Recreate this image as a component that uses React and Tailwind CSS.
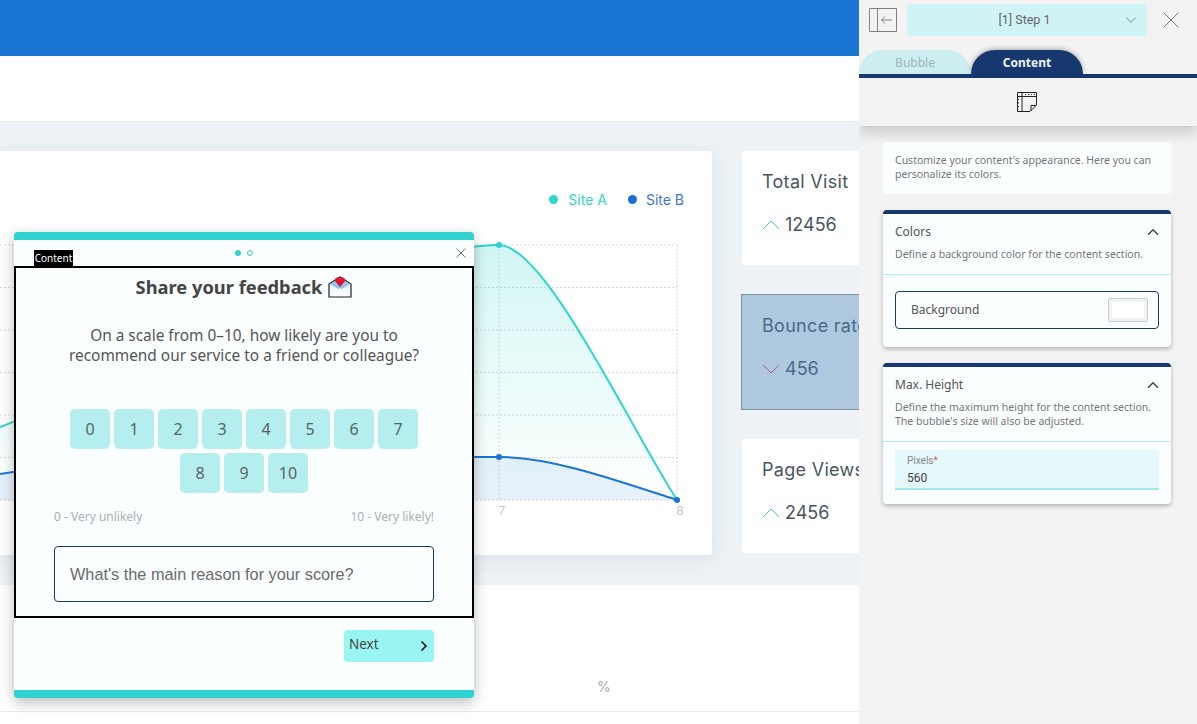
import { ChevronUp, ChevronDown, ChevronRight } from "lucide-react";

const scores = [0, 1, 2, 3, 4, 5, 6, 7, 8, 9, 10];
const gridRows = [245, 287.5, 330, 372.5, 415, 457.5, 500];
const gridCols = [143, 321, 499, 677];

const Chart = () => (
  <svg width="712" height="290" viewBox="0 235 712 290" className="block">
    <defs>
      <linearGradient id="tealFill" x1="0" y1="0" x2="0" y2="1">
        <stop offset="0" stopColor="#2fd6cd" stopOpacity="0.22" />
        <stop offset="1" stopColor="#2fd6cd" stopOpacity="0" />
      </linearGradient>
    </defs>
    {gridRows.map((y) => (
      <line key={y} x1="0" x2="677" y1={y} y2={y} stroke="#d4d7da" strokeDasharray="2 2" />
    ))}
    {gridCols.map((x) => (
      <line key={x} x1={x} x2={x} y1="245" y2="500" stroke="#d4d7da" strokeDasharray="2 2" />
    ))}
    <path d="M0 427 C 150 370, 380 245, 499 245 C 545 245, 630 427, 677 500 L 0 500 Z" fill="url(#tealFill)" />
    <path d="M0 474 C 150 450, 400 457, 499 457 C 550 457, 610 478, 677 500 L 0 500 Z" fill="#1a73d9" fillOpacity="0.1" />
    <path d="M0 427 C 150 370, 380 245, 499 245 C 545 245, 630 427, 677 500" fill="none" stroke="#2fd6cd" strokeWidth="2" />
    <path d="M0 474 C 150 450, 400 457, 499 457 C 550 457, 610 478, 677 500" fill="none" stroke="#1a73d9" strokeWidth="2" />
    <circle cx="499" cy="245" r="3" fill="#2fd6cd" />
    <circle cx="499" cy="457" r="3" fill="#1a73d9" />
    <circle cx="677" cy="500" r="3" fill="#1a73d9" />
    <text x="502" y="515" textAnchor="middle" fontSize="12" fill="#c4c7ca" fontFamily="Inter, sans-serif">7</text>
    <text x="680" y="515" textAnchor="middle" fontSize="12" fill="#c4c7ca" fontFamily="Inter, sans-serif">8</text>
  </svg>
);

const StatCard = ({ title, value, down, className }) => (
  <div className={`h-[114px] w-[200px] pl-5 pt-[19px] rounded font-['Inter',sans-serif] ${className}`}>
    <div className="text-[18px] leading-[24px] tracking-[0.3px] whitespace-nowrap">{title}</div>
    <div className="mt-[19px] flex items-center gap-[5px]">
      <svg width="18" height="12" viewBox="0 0 18 12" fill="none" stroke={down ? "#b0627f" : "#2fd6cd"} strokeWidth="1">
        {down ? <path d="M1 2 L9 10 L17 2" /> : <path d="M1 10 L9 2 L17 10" />}
      </svg>
      <span className="text-[18px] leading-[24px]">{value}</span>
    </div>
  </div>
);

const Mail = () => (
  <svg width="24" height="24" viewBox="0 0 24 24" className="ml-[6px]">
    <path d="M1 9 L12 2 L23 9 V22 H1 Z" fill="#f2f4f6" stroke="#222" strokeWidth="1.2" />
    <path d="M2 9 L12 3 L22 9 L12 15 Z" fill="#8cc4ee" />
    <path d="M2 21 L12 13 L22 21 Z" fill="#fbfcfd" />
    <path d="M12 12 L7 6 C 6 3, 10 1, 12 4 C 14 1, 18 3, 17 6 Z" fill="#e8112d" />
  </svg>
);

const Popup = () => (
  <div className="absolute left-[14px] top-[232px] z-10 flex h-[466px] w-[460px] flex-col rounded-[4px] bg-[#fafeff] shadow-[0_4px_14px_rgba(0,0,0,0.28)] overflow-hidden">
    <div className="h-2 bg-[#2fd1d1]" />
    <div className="relative flex h-[26px] justify-center">
      <div className="flex items-center gap-[6px] h-[26px]">
        <span className="h-[6px] w-[6px] rounded-full bg-[#2fd1d1]" />
        <span className="h-[6px] w-[6px] rounded-full border border-[#2fd1d1]" />
      </div>
      <div className="absolute left-5 bottom-0 h-4 w-[39px] bg-black text-center text-[10px] leading-4 text-white font-['Noto_Sans',sans-serif]">Content</div>
      <svg width="10" height="10" viewBox="0 0 10 10" className="absolute right-2 top-2" stroke="#555" strokeWidth="0.8">
        <path d="M0.5 0.5 L9.5 9.5 M9.5 0.5 L0.5 9.5" />
      </svg>
    </div>
    <div className="flex h-[352px] flex-col items-center border-2 border-black px-[38px] font-['Noto_Sans',sans-serif]">
      <div className="mt-[5px] flex h-[28px] items-center">
        <span className="text-[18.3px] font-bold leading-[28px] text-[#444]">Share your feedback</span>
        <Mail />
      </div>
      <p className="mt-[25px] text-center text-[15.4px] leading-[20px] text-[#555]">
        On a scale from 0–10, how likely are you to<br />recommend our service to a friend or colleague?
      </p>
      <div className="mt-[43px] flex w-[360px] flex-wrap justify-center gap-1">
        {scores.map((n) => (
          <div key={n} className="flex h-10 w-10 items-center justify-center rounded-[5px] bg-[#b4eeee] text-[16px] text-[#5a6464]">{n}</div>
        ))}
      </div>
      <div className="mt-4 flex w-full justify-between text-[12px] leading-4 text-[#aab0b0]">
        <span>0 - Very unlikely</span>
        <span>10 - Very likely!</span>
      </div>
      <div className="mt-[21px] flex h-[56px] w-full items-center rounded-[4px] border border-[#17376f] px-[15px] text-[16.3px] text-[#6b6b6b] font-['Liberation_Sans',sans-serif]">
        What's the main reason for your score?
      </div>
    </div>
    <div className="flex flex-1 items-start justify-end px-10 pt-3">
      <div className="flex h-8 w-[90px] items-center justify-between rounded-[4px] bg-[#98f5f2] pb-[3px] pl-[5px] pr-[2px] text-[13.5px] text-[#444] font-['Noto_Sans',sans-serif]">
        Next
        <ChevronRight size={16} strokeWidth={2.5} color="#111" className="mt-[3px]" />
      </div>
    </div>
    <div className="h-2 bg-[#2fd1d1]" />
  </div>
);

const SectionCard = ({ title, children, desc }) => (
  <div className="rounded-[4px] border-t-4 border-[#17376f] bg-[#fafeff] shadow-[0_2px_4px_rgba(0,0,0,0.28)]">
    <div className="border-b border-[#b4eeee] px-3 pt-[9px] pb-[13px]">
      <div className="flex items-center justify-between">
        <span className="text-[12px] leading-[18px] text-[#555]">{title}</span>
        <ChevronUp size={18} strokeWidth={2} color="#444" className="-mr-[3px]" />
      </div>
      <p className="mt-[6px] text-[10.5px] leading-[14px] text-[#777]">{desc}</p>
    </div>
    {children}
  </div>
);

const SidePanel = () => (
  <div className="relative z-20 flex w-[338px] flex-col overflow-hidden bg-[#f3f3f3] font-['Noto_Sans',sans-serif]">
    <div className="flex h-[50px] items-start pt-1">
      <svg width="28" height="24" viewBox="0 0 28 24" fill="none" stroke="#808080" className="ml-[10px] mt-1 shrink-0">
        <path d="M0.5 0.5 H27.5 V23.5 H0.5 Z M8.5 0.5 V23.5" />
        <path d="M23 12 H12.5 M16 8.5 L12.5 12 L16 15.5" />
      </svg>
      <div className="ml-[10px] flex h-8 w-[240px] items-center justify-center rounded-[3px] bg-[#d0f4f6] relative pr-[5px] text-[12.5px] text-[#666] font-['Roboto',sans-serif]">
        [1] Step 1
        <ChevronDown size={18} strokeWidth={1} color="#666" className="absolute right-[7px]" />
      </div>
      <svg width="16" height="16" viewBox="0 0 16 16" stroke="#777" className="ml-4 mt-2">
        <path d="M0.5 0.5 L15.5 15.5 M15.5 0.5 L0.5 15.5" />
      </svg>
    </div>
    <div className="flex h-6">
      <div className="flex w-[112px] items-center justify-center rounded-t-[24px] bg-[#cdeef0] pt-[2px] text-[12px] text-[#9eb4b8]">Bubble</div>
      <div className="flex w-[112px] items-center justify-center rounded-t-[24px] bg-[#17376f] pt-[2px] text-[12px] font-bold text-[#eef4f8] shadow-[0_-1px_5px_rgba(0,0,0,0.3)]">Content</div>
    </div>
    <div className="h-1 bg-[#17376f]" />
    <div className="flex h-[48px] items-center justify-center pr-[2px] shadow-[0_8px_12px_rgba(0,0,0,0.16)]">
      <svg width="20" height="20" viewBox="0 0 20 20" fill="none" stroke="#222">
        <path d="M0.5 0.5 H19.5 V13 L13 19.5 H0.5 Z" />
        <path d="M0.5 4.5 H19.5 M5 0.5 V19.5 M19 13.5 H14 V19" />
        <path d="M8 2.5 H18 M1 7.5 H4 M1 11 H4 M1 14.5 H4" strokeDasharray="1 2" />
      </svg>
    </div>
    <div className="flex flex-col gap-4 pl-6 pr-[26px] pt-4">
      <div className="h-[52px] rounded-[4px] bg-[#fafeff] px-3 pt-[11px] text-[10.5px] leading-[14px] text-[#777]">
        Customize your content's appearance. Here you can personalize its colors.
      </div>
      <SectionCard title="Colors" desc="Define a background color for the content section.">
        <div className="px-3 pb-[18px] pt-4">
          <div className="flex h-[38px] items-center justify-between rounded-[4px] border border-[#17376f] pl-[15px] pr-[10px] text-[12px] text-[#555]">
            Background
            <div className="h-6 w-10 rounded-[2px] border border-[#c8cccc] bg-[#f0f3f5] p-[3px]">
              <div className="h-full w-full bg-white" />
            </div>
          </div>
        </div>
      </SectionCard>
      <SectionCard title="Max. Height" desc={<>Define the maximum height for the content section.<br />The bubble's size will also be adjusted.</>}>
        <div className="px-3 pb-[14px] pt-2">
          <div className="h-[40px] rounded-t-[3px] border-b-2 border-[#a0eae8] bg-[#e4f7fa] pl-3 pt-[5px] font-['Roboto',sans-serif]">
            <div className="text-[10px] leading-[12px] text-[#888]">Pixels<span className="text-[#e55]">*</span></div>
            <div className="mt-[3px] text-[12px] leading-[16px] text-[#444]">560</div>
          </div>
        </div>
      </SectionCard>
    </div>
  </div>
);

export default function App() {
  return (
    <div className="relative flex h-[724px] w-[1197px] overflow-hidden bg-white">
      <div className="flex w-[859px] shrink-0 flex-col overflow-hidden">
        <div className="h-14 bg-[#1976d2]" />
        <div className="h-[66px] border-b border-[#e4e8ea] bg-white" />
        <div className="flex h-[463px] gap-[30px] bg-[#ecf2f5] pt-[29px]">
          <div className="h-[404px] w-[712px] shrink-0 rounded-r-[4px] bg-white pt-[39px] shadow-[0_4px_20px_rgba(160,175,190,0.2)]">
            <div className="flex h-[18px] items-center justify-end pr-[28px] text-[14px] font-['Inter',sans-serif]">
              <span className="h-[9px] w-[9px] rounded-full bg-[#2fd6cd]" />
              <span className="ml-[10px] text-[#2fd6cd]">Site A</span>
              <span className="ml-[21px] h-[9px] w-[9px] rounded-full bg-[#1a6fd4]" />
              <span className="ml-[9px] text-[#3f73d9]">Site B</span>
            </div>
            <div className="mt-[27px]">
              <Chart />
            </div>
          </div>
          <div className="flex shrink-0 flex-col">
            <StatCard title="Total Visit" value="12456" className="bg-white text-[#4a5560]" />
            <StatCard title="Bounce rate" value="456" down className="mt-[29px] h-[116px] -ml-px border border-[#7f8c99] !rounded-none bg-[#aec8e0] text-[#4a6a8a]" />
            <StatCard title="Page Views" value="2456" className="mt-[29px] bg-white text-[#4a5560]" />
          </div>
        </div>
        <div className="relative h-[127px] border-b border-[#e8eaec] bg-white">
          <span className="absolute left-[597px] top-[91px] text-[14px] text-[#a5a9ad] font-['Inter',sans-serif]">%</span>
        </div>
      </div>
      <SidePanel />
      <Popup />
    </div>
  );
}
